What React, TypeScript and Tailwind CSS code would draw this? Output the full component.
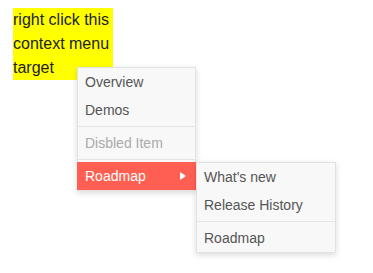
import React from "react";

const item = "h-[28px] flex items-center px-[7px] text-[14px] text-[#555] whitespace-nowrap";
const sep = "my-[2px] h-px bg-[#e4e4e4]";

export default function App() {
  return (
    <div className="relative w-[373px] h-[273px] bg-white pt-[8px] pl-[13px]" style={{ fontFamily: '"Liberation Sans", Arial, sans-serif' }}>
      <div className="w-[100px] bg-[#ffff00] text-[16px] leading-[24px] text-[#222]">
        right click this context menu target
      </div>
      <div className="absolute left-[77px] top-[67px] w-[119px] border border-[#e2e2e2] bg-[#f8f8f8] shadow-[0_2px_6px_rgba(0,0,0,0.15)]">
        <div className={item}>Overview</div>
        <div className={item}>Demos</div>
        <div className={sep} />
        <div className={`${item} !text-[#aaa]`}>Disbled Item</div>
        <div className={sep} />
        <div className="relative -mx-px h-[28px] flex items-center pl-[8px] pr-[10px] text-[14px] text-white bg-[#ff5f52]">
          <span className="flex-1">Roadmap</span>
          <svg width="6" height="8" viewBox="0 0 6 8"><path d="M0 0 L6 4 L0 8 Z" fill="#fff" /></svg>
          <div className="absolute left-[119px] top-0 w-[140px] border border-[#e2e2e2] bg-[#f8f8f8] shadow-[0_2px_6px_rgba(0,0,0,0.15)]">
            <div className={item}>What's new</div>
            <div className={item}>Release History</div>
            <div className={sep} />
            <div className={item}>Roadmap</div>
          </div>
        </div>
      </div>
    </div>
  );
}
